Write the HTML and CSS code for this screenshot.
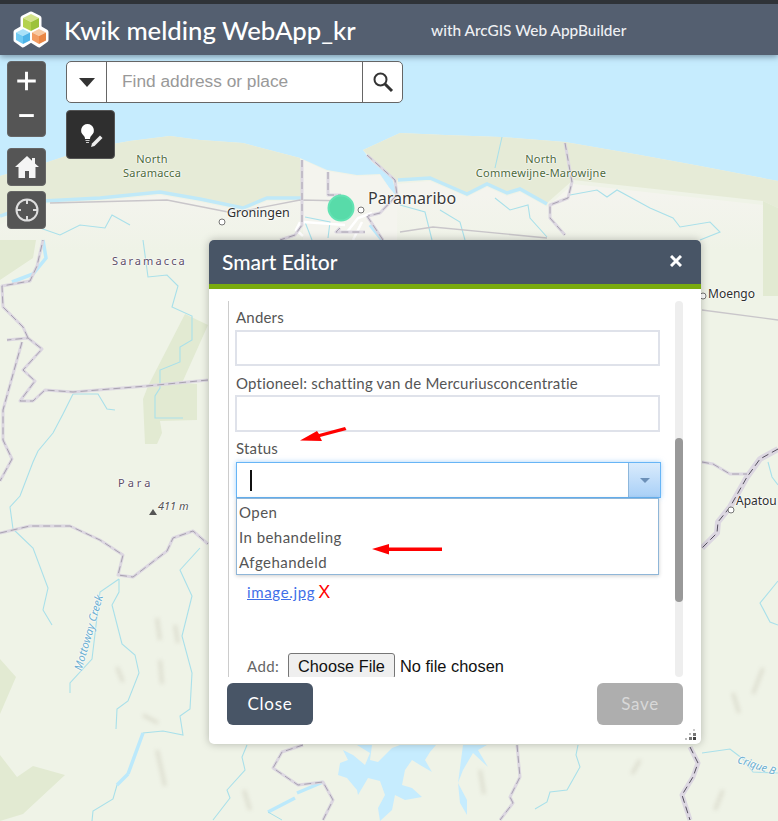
FILE: index.html
```html
<!DOCTYPE html>
<html lang="nl">
<head>
<meta charset="utf-8">
<title>Kwik melding WebApp_kr</title>
<link rel="stylesheet" href="styles.css">
</head>
<body>
<div class="app">
  <header class="header">
    <svg class="logo" width="36" height="38" viewBox="0 0 36 38">
      <g fill="#fff" stroke="#fff" stroke-width="5" stroke-linejoin="round"><path d="M18 4l8 4v10l-8 4-8-4V8z"/><path d="M10 18l8 4v8l-8 5-7-5v-8z"/><path d="M26 18l7 4v8l-7 5-8-5v-8z"/></g>
      <path d="M18 4l8 4-8 4-8-4z" fill="#d3e389"/><path d="M10 8l8 4v9l-8-4z" fill="#b4d24f"/><path d="M26 8v9l-8 4v-9z" fill="#9cc23c"/>
      <path d="M10 19l7 3.500-7 3.500-7-3.500z" fill="#a9e1f8"/><path d="M3 22.500l7 3.500v8l-7-4z" fill="#6fcaf3"/><path d="M17 22.500v8l-7 3.500v-8z" fill="#4eb4e8"/>
      <path d="M26 19l7 3.500-7 3.500-7-3.500z" fill="#f8c9a2"/><path d="M19 22.500l7 3.500v8l-7-4z" fill="#f29c62"/><path d="M33 22.500v8l-7 3.500v-8z" fill="#ea8644"/>
    </svg>
    <h1 class="title">Kwik melding WebApp_kr</h1>
    <span class="subtitle">with ArcGIS Web AppBuilder</span>
  </header>

  <main class="map">
    <svg class="basemap" width="778" height="821" viewBox="0 0 778 821">
      <defs>
        <filter id="blur" x="-20%" y="-20%" width="140%" height="140%"><feGaussianBlur stdDeviation="2"/></filter>
        <linearGradient id="fade" gradientUnits="userSpaceOnUse" x1="0" y1="195" x2="0" y2="250"><stop offset="0" stop-color="#f4f4ee"/><stop offset="1" stop-color="#eff3e7"/></linearGradient>
      </defs>
      <rect width="778" height="821" fill="#eff3e7"/>
      <path d="M0 0H778V181L700 166 640 155 565 142 500 137 445 135 400 133 363 150 372 162 392 178 397 196 382 210 368 213 362 208 382 200 388 186 380 174 357 175 327 170 300 158 243 143 200 140 170 136 130 141 90 148 45 163 0 176Z" fill="#c6ecfe"/>
      <path d="M0 176L45 163 90 148 130 141 170 136 200 140 243 143 300 158 302 197 267 197 243 207 200 198 160 191 100 197 43 200 0 215Z" fill="#e6ebd7"/>
      <path d="M363 150L400 133 445 135 500 137 565 142 640 155 700 166 778 181V208L763 201 573 180 547 203 520 188 507 192 487 183 467 193 430 177 397 180 370 157Z" fill="#e6ebd7"/>
      <path d="M303 160L327 171 357 176 380 175 388 186 397 197 400 250H303Z" fill="#f4f4ee"/>
      <path d="M43 204L100 201 160 195 200 202 243 211 267 201 302 201V250H0V225ZM397 184L430 181 467 197 487 187 507 196 520 192 547 207 573 184 763 205 778 208V250H397Z" fill="url(#fade)"/>
      <path d="M0 216L43 201 100 198 160 192 200 199 243 208 267 198 302 198M398 180L430 178 467 194 487 184 507 193 520 189 547 204" fill="none" stroke="#c0e9f8" stroke-width="3.500"/>
      <path d="M185 314L208 325 182 383 197 384 197 420 160 421 162 433 157 444 145 444 143 399 148 386Z" fill="#e2ead2"/>
      <path d="M0 659L16 677 0 714ZM0 755L17 777 33 766 65 775 23 814 0 821ZM0 240H36L33 258 0 280ZM763 240H778V296H763ZM763 201L778 208V240H763Z" fill="#e2ead2"/>
      <g filter="url(#blur)" fill="none" stroke="#a79f8a" stroke-width="3" opacity=".3">
        <path d="M157 618l3 22M175 625l3 18M117 667l6 15M143 715l15 8M157 750l8 36M763 668l-10 26M733 693l6 20M723 790l-8 20M244 790l6 20M160 660l2 24M640 760l-8 14M480 770l4 24"/>
      </g>
      <path d="M357 745H372L370 760 378 762 392 748 400 745H436L430 752 425 760 432 772 420 765 412 760 405 770 402 785 412 788 422 797 405 800 395 795 392 810 380 821 378 808 385 795 380 781 368 778 358 795 357 790 347 778 338 775 340 763 348 760 343 750 353 755 365 765 370 753ZM463 745H487L478 750 488 767 473 753 463 770 458 783 467 800 467 815 460 803 458 783Z" fill="#c6ecfe"/>
      <g fill="none" stroke="#a9e0ea" stroke-width="1.100">
        <path d="M73 394L63 414 53 433 38 451 33 462 20 496 10 507 13 529 33 548 48 588 43 610 52 625"/>
        <path d="M115 410L107 409 98 394 73 394"/>
        <path d="M143 240L148 277 167 275 178 286 172 307 192 316 192 340 180 347 180 362 160 370 160 388 155 396 155 418 183 418"/>
        <path d="M119 579L100 592 92 659 70 683 70 693"/>
        <path d="M119 579V592L112 605 122 644 135 655 139 673 128 701 117 709 116 729"/>
        <path d="M200 548L180 570 192 596 182 636 192 673 190 709 180 716 183 735 163 731 143 733 128 774 117 785 113 799 93 811 92 821"/>
        <path d="M495 198L510 210 528 205 530 218 547 237M502 137L495 168M570 195L597 190 607 197 617 190 650 208 673 218 680 227 710 222 720 232 700 240"/>
        <path d="M778 581L760 603 770 622 778 625M768 462L772 477 778 485M702 753L730 749 743 759 753 772 778 773"/>
        <path d="M40 228L60 235 80 225 105 228 112 215 130 225M305 217L330 222 328 238M305 222L312 240M247 745L242 757 245 770 227 790 230 798 213 820M578 745L576 755 580 767 567 790 550 792 547 802 535 809M400 205L425 212 432 240M440 210L460 222 465 240"/>
      </g>
      <path d="M128 774L117 785M143 733L128 774M43 240L46 258 33 274 12 282M323 782L297 793M295 798L268 812M370 225L382 240" fill="none" stroke="#bce9fb" stroke-width="3.500"/>
      <path d="M268 812L282 820" fill="none" stroke="#a9e0ea"/>
      <g fill="none" stroke="#c9c6ca" stroke-width="1.300">
        <path d="M50 203L167 200 233 213 300 200 350 201"/><path d="M400 232L433 227 547 238"/><path d="M702 310L778 320"/>
      </g>
      <path d="M296 230L304 222 345 225M347 232L358 218 372 213M353 240L362 222M300 222L296 230 303 236" fill="none" stroke="#fff" stroke-width="2.500"/>
      <g fill="none" stroke="#dcd7e1" stroke-linejoin="round" stroke-width="3">
        <path d="M208 380L147 386 73 392 45 390 33 401 20 401 35 381 23 370 42 349 28 338 7 340M28 338L23 327 3 307 2 286 30 281 37 266 43 240M22 342L3 410 3 440 12 459 0 481M0 533L30 526 70 526 100 540 123 555 118 575 133 577 167 551 173 538 193 531 208 544"/>
        <path d="M302 160V225L295 235 280 240M328 172V195H341M367 155L395 180 397 195 380 213 368 216M367 216L383 240M340 228L336 232H365M565 143L572 182 568 198 550 205 550 218 565 235M702 462L713 464 730 474 747 474"/>
        <path d="M303 745L282 752 273 768 298 785 323 782 333 800 323 820M517 745L520 777 510 797 513 803 500 820"/>
        <path d="M690 747L698 763 693 777 682 795 690 820" stroke-width="5"/>
        <path d="M778 449L760 459 747 477 730 507 718 522 717 533 702 548" stroke-width="6"/>
      </g>
      <g fill="none" stroke="#a8a2b0" stroke-width="1" stroke-dasharray="7 4">
        <path d="M208 380L147 386 73 392 45 390 33 401 20 401 35 381 23 370 42 349 28 338 7 340M28 338L23 327 3 307 2 286 30 281 37 266 43 240M22 342L3 410 3 440 12 459 0 481M0 533L30 526 70 526 100 540 123 555 118 575 133 577 167 551 173 538 193 531 208 544"/>
        <path d="M302 160V225L295 235 280 240M328 172V195H341M367 155L395 180 397 195 380 213 368 216M367 216L383 240M340 228L336 232H365M565 143L572 182 568 198 550 205 550 218 565 235M702 462L713 464 730 474 747 474"/>
        <path d="M303 745L282 752 273 768 298 785 323 782 333 800 323 820M517 745L520 777 510 797 513 803 500 820"/>
        <path d="M690 747L698 763 693 777 682 795 690 820" stroke="#55505f"/>
        <path d="M778 449L760 459 747 477 730 507 718 522 717 533 702 548" stroke="#55505f"/>
      </g>
      <g fill="#fff" stroke="#777"><circle cx="222" cy="222" r="3"/><circle cx="361" cy="210" r="3"/><circle cx="703" cy="296" r="3"/><circle cx="731" cy="510" r="3"/></g>
      <path d="M153 509l4 6h-8z" fill="#555"/>
      <circle cx="341" cy="208" r="12.500" fill="#58dba9" stroke="#63e3b3" stroke-width="2"/>
    </svg>

    <span class="place region n1">North<br>Saramacca</span>
    <span class="place region n2">North<br>Commewijne-Marowijne</span>
    <span class="place city">Paramaribo</span>
    <span class="place town groningen">Groningen</span>
    <span class="place town moengo">Moengo</span>
    <span class="place town apatou">Apatou</span>
    <span class="place district saramacca">Saramacca</span>
    <span class="place district para">Para</span>
    <span class="place peak">411 m</span>
    <span class="place water creek">Mottoway Creek</span>
    <span class="place water crique">Crique B</span>

    <div class="ctrl zoomctl">
      <svg width="39" height="38" viewBox="0 0 39 38"><path d="M19.500 10v19M10 19.500h19" stroke="#fff" stroke-width="3"/></svg>
      <svg width="39" height="38" viewBox="0 0 39 38"><path d="M12 17h15" stroke="#fff" stroke-width="3"/></svg>
    </div>
    <div class="ctrl homectl">
      <svg width="26" height="26" viewBox="0 0 26 26"><path d="M13 2L1 13h3.500v11H11v-7h4v7h6.500V13H25l-4-3.600V4h-3v2.700z" fill="#f4f4f4"/></svg>
    </div>
    <div class="ctrl locatectl">
      <svg width="28" height="28" viewBox="0 0 28 28"><circle cx="14" cy="14" r="10.500" fill="none" stroke="#ddd" stroke-width="2"/><path d="M14 3v5M14 20v5M3 14h5M20 14h5" stroke="#ddd" stroke-width="2"/></svg>
    </div>

    <div class="search">
      <div class="search-menu"><span class="caret"></span></div>
      <div class="search-input">Find address or place</div>
      <div class="search-btn">
        <svg width="22" height="22" viewBox="0 0 22 22"><circle cx="8.500" cy="8.500" r="6" fill="none" stroke="#333" stroke-width="2"/><path d="M13 13l7 7" stroke="#333" stroke-width="3"/></svg>
      </div>
    </div>
    <div class="editbtn">
      <svg width="30" height="32" viewBox="0 0 30 32"><path d="M11.500 5a6.500 6.500 0 0 1 4 11.500c-1 1-1.500 2-1.500 3.500H9c0-1.500-.5-2.500-1.500-3.500A6.500 6.500 0 0 1 11.500 5z" fill="#fff"/><path d="M9.500 21.500h4M10 23.500h3" stroke="#ccc" stroke-width="1.200"/><path d="M15 28l1-3.500 8-8 2.500 2.500-8 8z" fill="#eee"/></svg>
    </div>

    <section class="dialog">
      <div class="dialog-title">
        <h2 class="dialog-name">Smart Editor</h2>
        <svg class="dialog-x" width="12" height="12" viewBox="0 0 12 12"><path d="M1 1l10 10M11 1L1 11" stroke="#fff" stroke-width="3"/></svg>
      </div>
      <div class="dialog-body">
        <div class="scroller">
          <div class="form">
            <div class="label first">Anders</div>
            <div class="input tall1"></div>
            <div class="label second">Optioneel: schatting van de Mercuriusconcentratie</div>
            <div class="input tall2"></div>
            <div class="label third">Status</div>
            <div class="combo-wrap">
              <div class="combo">
                <div class="combo-text"><span class="text-caret"></span></div>
                <div class="combo-arrow"><span class="combo-tri"></span></div>
              </div>
              <ul class="menu">
                <li>Open</li>
                <li>In behandeling</li>
                <li>Afgehandeld</li>
              </ul>
            </div>
            <div class="attachment"><a class="file-link">image.jpg</a><span class="remove">X</span></div>
            <div class="add-row">
              <span class="add-label">Add:</span>
              <span class="choose">Choose File</span>
              <span class="nofile">No file chosen</span>
            </div>
          </div>
          <div class="track"><div class="thumb"></div></div>
        </div>
        <div class="footer">
          <div class="btn close">Close</div>
          <div class="btn save">Save</div>
        </div>
      </div>
      <svg class="grip" width="14" height="14" viewBox="0 0 14 14"><g fill="#444"><rect x="9" y="9" width="3" height="3"/><rect x="5" y="9" width="3" height="3" fill="#777"/><rect x="9" y="5" width="3" height="3" fill="#777"/><rect x="1" y="10" width="2" height="2" fill="#bbb"/><rect x="5" y="5" width="2" height="2" fill="#bbb"/><rect x="9" y="1" width="2" height="2" fill="#ccc"/></g></svg>
    </section>

    <svg class="arrows" width="778" height="821" viewBox="0 0 778 821">
      <g fill="#f00"><path d="M300 440.500L317 431 319 434 345 427 346.500 430 320 437 322 441z"/><path d="M372 549l17-5v3.500h53v3.500h-53v3.500z"/></g>
    </svg>
  </main>
</div>
</body>
</html>
```
FILE: styles.css
```css
* { box-sizing: border-box; }
html, body { margin: 0; padding: 0; }
body { font-family: "Lato", "Liberation Sans", sans-serif; overflow: hidden; }
.app { position: relative; width: 778px; height: 821px; overflow: hidden; display: flex; flex-direction: column; border-top: 4px solid #2f3338; }

.header { position: relative; z-index: 3; height: 51px; flex: none; display: flex; align-items: center; background: #545f70; color: #fff; padding-left: 13px; box-shadow: 0 2px 6px rgba(60,80,100,.55); }
.logo { flex: none; margin-top: -1px; }
.title { margin: 0 0 0 15px; font-size: 25.700px; font-weight: 500; white-space: nowrap; width: 367px; }
.subtitle { font-size: 15.400px; font-weight: 500; color: #eef0f3; white-space: nowrap; }

.map { position: absolute; left: 0; top: -4px; width: 778px; height: 821px; }
.basemap, .arrows { position: absolute; left: 0; top: 0; display: block; }
.arrows { pointer-events: none; }

.place { position: absolute; font-family: "Noto Sans", sans-serif; white-space: nowrap; text-shadow: 0 0 2px #fff, 0 0 2px #fff, 0 0 2px #fff; line-height: 1; }
.region { font-size: 11px; line-height: 14px; color: #4d6a3a; text-align: center; transform: translateX(-50%); letter-spacing: .25px; }
.n1 { left: 152px; top: 152px; }
.n2 { left: 541px; top: 152px; }
.city { left: 368px; top: 190px; font-size: 16px; color: #3a3a3a; }
.town { font-size: 12px; color: #2f2f2f; }
.groningen { left: 227px; top: 207px; font-size: 12.500px; }
.moengo { left: 708px; top: 288px; }
.apatou { left: 736px; top: 495px; }
.district { font-size: 11px; letter-spacing: 2.100px; color: #5d4d68; }
.saramacca { left: 112px; top: 255px; }
.para { left: 118px; top: 477px; letter-spacing: 3px; }
.peak { left: 158px; top: 500px; font-size: 11px; font-style: italic; color: #555; }
.water { font-size: 11px; font-style: italic; color: #6aaed0; }
.creek { left: 49px; top: 627px; transform: rotate(-74deg); }
.crique { left: 737px; top: 760px; font-size: 10.500px; transform: rotate(18deg); }

.ctrl { position: absolute; left: 7px; width: 39px; background: #555; border: 1px solid #666; border-radius: 4px; display: flex; flex-direction: column; align-items: center; justify-content: center; }
.zoomctl { top: 61px; height: 76px; }
.homectl { top: 148px; height: 38px; }
.locatectl { top: 191px; height: 38px; }

.search { position: absolute; left: 66px; top: 61px; width: 337px; height: 42px; display: flex; background: #fff; border: 1px solid #666; border-radius: 5px; color: #999; }
.search-menu { width: 40px; display: flex; align-items: center; justify-content: center; border-right: 1px solid #666; }
.caret { width: 0; height: 0; border-left: 8px solid transparent; border-right: 8px solid transparent; border-top: 9px solid #333; }
.search-input { width: 255px; padding-left: 15px; font-family: "Liberation Sans", sans-serif; font-size: 17.300px; line-height: 39px; }
.search-btn { flex: 1; display: flex; align-items: center; justify-content: center; border-left: 1px solid #666; }

.editbtn { position: absolute; left: 66px; top: 110px; width: 49px; height: 49px; background: #2f2f2f; border: 1px solid #555; border-radius: 4px; display: flex; align-items: center; justify-content: center; }

.dialog { position: absolute; left: 209px; top: 240px; width: 492px; height: 504px; background: #fff; border-radius: 5px; box-shadow: 0 0 8px rgba(0,0,0,.25); display: flex; flex-direction: column; overflow: hidden; }
.dialog-title { flex: none; height: 49px; background: #485566; border-bottom: 5px solid #7aab0f; display: flex; align-items: center; justify-content: space-between; padding: 0 19px 2px 13px; color: #fff; }
.dialog-name { margin: 0; font-size: 21px; font-weight: 500; }
.dialog-body { flex: 1; display: flex; flex-direction: column; padding: 12px 18px 19px; min-height: 0; }
.scroller { flex: none; height: 376px; margin-left: 1px; border-left: 1px solid #ccc; display: flex; overflow: hidden; }
.form { flex: 1; width: 446px; padding: 6px 15px 0 6px; color: #444; }
.label { font-size: 15px; line-height: 20px; letter-spacing: .2px; color: #555; margin-left: 1px; }
.second { margin-top: 7px; }
.third { margin-top: 6px; }
.input { width: 425px; background: #fff; border: 2px solid #dfe2ea; }
.tall1 { height: 36px; margin-top: 3px; }
.tall2 { height: 37px; margin-top: 2px; }
.combo-wrap { position: relative; margin: 4px 0 0 1px; width: 425px; }
.combo { height: 36px; display: flex; border: 1px solid #67b5f6; box-shadow: 0 0 5px rgba(110,180,245,.6); background: #fff; }
.combo-text { flex: 1; display: flex; align-items: center; padding-left: 13px; }
.text-caret { width: 2px; height: 21px; background: #111; }
.combo-arrow { width: 32px; display: flex; align-items: center; justify-content: center; background: linear-gradient(#d9ebfc, #a9d0f7); border-left: 1px solid #8db7dc; }
.combo-tri { width: 0; height: 0; border-left: 5px solid transparent; border-right: 5px solid transparent; border-top: 5px solid #6c90b8; }
.menu { position: absolute; left: 0; top: 36px; width: 423px; height: 77px; margin: 0; padding: 1px 0 0 2px; list-style: none; background: #fff; border: 1px solid #8fb6d8; box-shadow: 0 1px 4px rgba(0,0,0,.2); }
.menu li { height: 25px; line-height: 25px; font-size: 15px; letter-spacing: .45px; color: #555; }
.attachment { margin: 84px 0 0 12px; line-height: 20px; font-size: 15px; letter-spacing: .65px; display: flex; gap: 3px; }
.file-link { color: #3f6fe8; text-decoration: underline; }
.remove { color: #f00; font-family: "Liberation Sans", sans-serif; font-size: 18px; line-height: 20px; letter-spacing: 0; }
.add-row { margin: 51px 0 0 12px; display: flex; align-items: center; white-space: nowrap; }
.add-label { font-size: 15px; letter-spacing: .4px; color: #666; width: 41px; }
.choose { height: 26px; width: 107px; background: #efefef; border: 1px solid #767676; border-radius: 3px; font-family: "Liberation Sans", sans-serif; font-size: 16.300px; line-height: 24px; text-align: center; color: #111; }
.nofile { margin-left: 5px; font-family: "Liberation Sans", sans-serif; font-size: 16.400px; color: #111; }
.track { flex: none; width: 8px; background: #eee; border-radius: 4px; padding-top: 137px; }
.thumb { height: 164px; background: #999; border-radius: 4px; }
.footer { flex: none; margin-top: 6px; display: flex; justify-content: space-between; }
.btn { width: 86px; height: 42px; border-radius: 6px; text-align: center; line-height: 42px; font-size: 17px; letter-spacing: .7px; color: #fff; }
.close { background: #485566; }
.save { background: #aeaeae; color: #d8d8d8; }
.grip { position: absolute; right: 3px; bottom: 2px; }
```
